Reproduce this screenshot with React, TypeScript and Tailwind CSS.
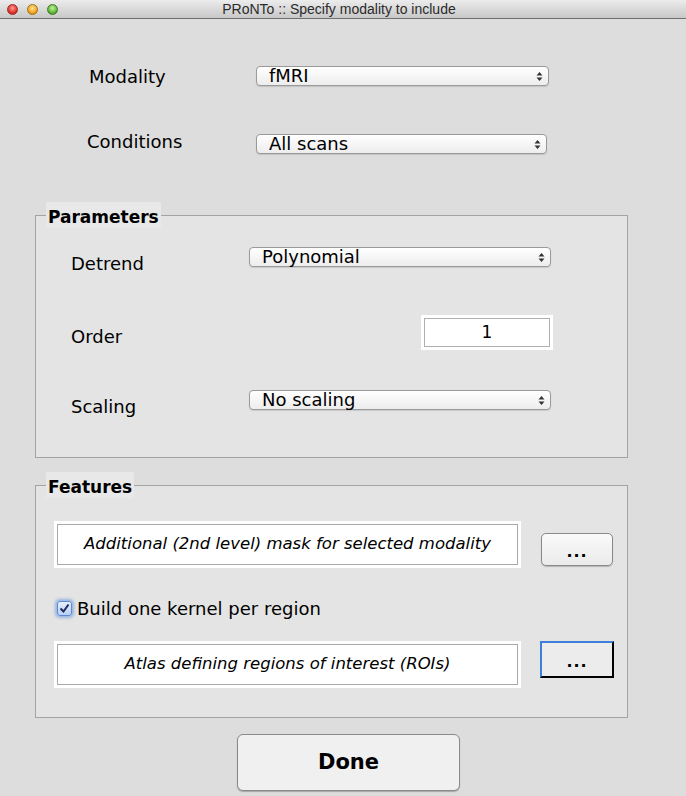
import React from "react";

const Arrows: React.FC = () => (
  <svg width="7" height="11" viewBox="0 0 7 11" className="shrink-0">
    <path d="M3.5 1 L6.5 4.5 L0.5 4.5 Z" fill="#333" />
    <path d="M3.5 10 L6.5 6.5 L0.5 6.5 Z" fill="#333" />
  </svg>
);

const Popup: React.FC<{ text: string; w: string }> = ({ text, w }) => (
  <div
    className={`${w} h-[20px] flex flex-row items-center justify-between rounded-[4px] border border-[#9a9a9a] bg-linear-to-b from-[#ffffff] to-[#ededed] pl-[12px] pr-[5px] shadow-[0_1px_1px_rgba(0,0,0,0.12)]`}
  >
    <span className="text-[18px] leading-[20px] text-black">{text}</span>
    <Arrows />
  </div>
);

const Legend: React.FC<{ text: string }> = ({ text }) => (
  <div className="absolute -top-[14px] left-[10px] h-[26px] px-[2px] bg-[#e8e8e8] text-[17px] font-bold leading-[30px] text-black">
    {text}
  </div>
);

const TextBox: React.FC<{ text: string }> = ({ text }) => (
  <div className="w-[467px] h-[47px] bg-white p-[3px]">
    <div className="h-full border border-[#a9a9a9] flex items-center justify-center text-[16.5px] italic text-black">
      {text}
    </div>
  </div>
);

const Check: React.FC = () => (
  <div className="w-[15px] h-[15px] rounded-[3px] border border-[#5a8ad6] bg-linear-to-b from-[#e6efff] to-[#b9d0f5] shadow-[0_0_3px_2px_rgba(90,140,220,0.55)] flex items-center justify-center">
    <svg width="11" height="11" viewBox="0 0 11 11">
      <path d="M1.5 5.5 L4.5 8.5 L9.5 1.5" stroke="#1d2a5a" strokeWidth="2" fill="none" />
    </svg>
  </div>
);

export default function App() {
  return (
    <div className="w-[686px] h-[796px] overflow-hidden bg-[#dddddd] font-['DejaVu_Sans',sans-serif] text-black">
      {/* title bar */}
      <div className="h-[19px] border-b border-[#6f6f6f] bg-linear-to-b from-[#ececec] to-[#c8c8c8] flex flex-row items-center relative">
        <div className="flex flex-row items-center gap-[9px] pl-[7px]">
          <span className="w-[11px] h-[11px] rounded-full bg-[radial-gradient(circle_at_50%_35%,#ff9a94,#e0352c_60%,#a2140e)] border border-[#9c2a24]" />
          <span className="w-[11px] h-[11px] rounded-full bg-[radial-gradient(circle_at_50%_35%,#ffe29a,#f2a723_60%,#b5700a)] border border-[#a0700e]" />
          <span className="w-[11px] h-[11px] rounded-full bg-[radial-gradient(circle_at_50%_35%,#c8f0a0,#5fb83a_60%,#2f7d16)] border border-[#3f7a22]" />
        </div>
        <div className="flex-1 text-center pr-[66px] text-[14px] leading-[19px] text-[#2b2b2b] font-['Liberation_Sans',sans-serif]">
          PRoNTo :: Specify modality to include
        </div>
      </div>

      {/* modality / conditions */}
      <div className="mt-[47px] h-[20px] flex flex-row items-start">
        <div className="w-[256px] pl-[89px] text-[18px] leading-[21px]">Modality</div>
        <Popup text="fMRI" w="w-[293px]" />
      </div>
      <div className="mt-[48px] h-[20px] flex flex-row items-start">
        <div className="w-[256px] pl-[87px] text-[18px] leading-[21px] -mt-[3px]">Conditions</div>
        <Popup text="All scans" w="w-[291px]" />
      </div>

      {/* parameters */}
      <div className="relative mt-[61px] ml-[35px] w-[593px] h-[243px] border border-[#a3a3a3] bg-[#e4e4e4]">
        <Legend text="Parameters" />
        <div className="mt-[31px] h-[20px] flex flex-row items-start">
          <div className="w-[213px] pl-[35px] text-[18px] leading-[21px] mt-[6px]">Detrend</div>
          <Popup text="Polynomial" w="w-[302px]" />
        </div>
        <div className="mt-[48px] h-[35px] flex flex-row items-start">
          <div className="w-[385px] pl-[35px] text-[18px] leading-[21px] mt-[11px]">Order</div>
          <div className="w-[132px] h-[35px] bg-white p-[3px]">
            <div className="h-full border border-[#b0b0b0] flex items-center justify-center text-[17px]">1</div>
          </div>
        </div>
        <div className="mt-[40px] h-[20px] flex flex-row items-start">
          <div className="w-[213px] pl-[35px] text-[18px] leading-[21px] mt-[6px]">Scaling</div>
          <Popup text="No scaling" w="w-[302px]" />
        </div>
      </div>

      {/* features */}
      <div className="relative mt-[27px] ml-[35px] w-[593px] h-[233px] border border-[#a3a3a3] bg-[#e4e4e4]">
        <Legend text="Features" />
        <div className="mt-[35px] flex flex-row items-start pl-[18px] gap-[20px]">
          <TextBox text="Additional (2nd level) mask for selected modality" />
          <div className="mt-[12px] w-[72px] h-[33px] rounded-[5px] border border-[#8a8a8a] bg-linear-to-b from-[#fafafa] to-[#eaeaea] shadow-[0_1px_1px_rgba(0,0,0,0.2)] flex items-center justify-center text-[16px] font-bold leading-none tracking-[1px] pt-[4px]">
            ...
          </div>
        </div>
        <div className="mt-[32px] h-[16px] flex flex-row items-center pl-[21px] gap-[5px]">
          <Check />
          <span className="text-[18px] leading-[21px]">Build one kernel per region</span>
        </div>
        <div className="mt-[25px] flex flex-row items-start pl-[18px] gap-[19px]">
          <TextBox text="Atlas defining regions of interest (ROIs)" />
          <div className="w-[74px] h-[37px] border-t-[2px] border-l-[2px] border-r-[2px] border-b-[2px] border-t-[#3f7fdc] border-l-[#3f7fdc] border-r-black border-b-black bg-[#ececec] flex items-center justify-center text-[16px] font-bold leading-none tracking-[1px] pt-[4px]">
            ...
          </div>
        </div>
      </div>

      {/* done */}
      <div className="mt-[16px] ml-[237px] w-[223px] h-[57px] rounded-[6px] border border-[#8a8a8a] bg-[#f0f0f0] shadow-[0_1px_1px_rgba(0,0,0,0.25)] flex items-center justify-center text-[21px] font-bold">
        Done
      </div>
    </div>
  );
}
